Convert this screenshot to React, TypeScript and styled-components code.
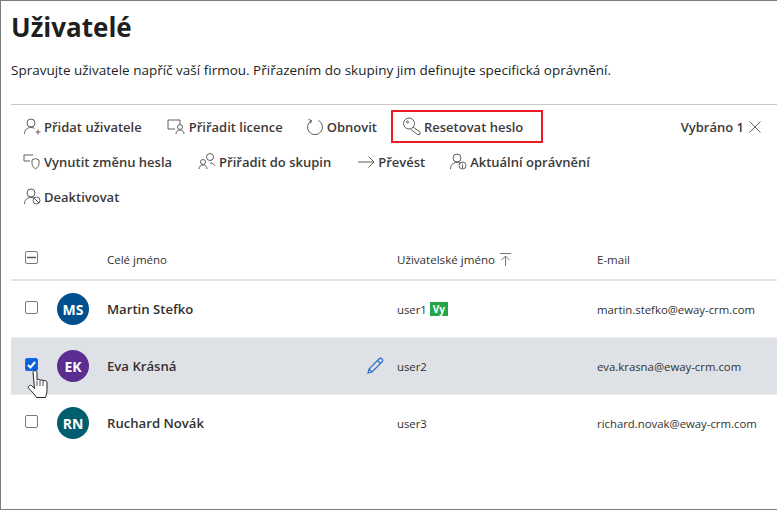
import React, { ReactNode } from "react";
import styled, { createGlobalStyle } from "styled-components";

const Global = createGlobalStyle`
  html, body { margin: 0; padding: 0; background: #fff; }
  body { font-family: "Open Sans", "Noto Sans", sans-serif; color: #201f1e; }
`;

const Frame = styled.div`
  width: 777px;
  height: 510px;
  box-sizing: border-box;
  border: 1px solid #7c7c7c;
  border-right: none;
  overflow: hidden;
  padding-left: 10px;
`;

const Title = styled.h1`
  margin: 0;
  padding-top: 7px;
  height: 38px;
  line-height: 38px;
  font-size: 26px;
  font-weight: 700;
  color: #201f1e;
`;

const Lead = styled.p`
  margin: 0;
  padding-top: 15px;
  height: 43px;
  line-height: 18px;
  font-size: 13.5px;
  color: #201f1e;
`;

const Toolbar = styled.div`
  border-top: 1px solid #c8c8c8;
  padding-top: 4px;
  height: 122px;
  box-sizing: border-box;
  display: flex;
  flex-direction: column;
`;

const ToolRow = styled.div`
  display: flex;
  align-items: center;
  height: 35px;
  padding-left: 11px;
`;

const Action = styled.div<{ $gap?: number; $mark?: boolean }>`
  display: flex;
  align-items: center;
  height: 33px;
  box-sizing: border-box;
  margin-right: ${(p) => p.$gap ?? 0}px;
  font-size: 13px;
  font-weight: 600;
  color: #3b3a39;
  white-space: nowrap;
  ${(p) => p.$mark && `border: 2px solid #ed1c24; padding: 0 18px 0 9px;`}
`;

const IconSlot = styled.svg`
  width: 22px;
  height: 22px;
  flex: none;
  fill: none;
  stroke: #605e5c;
  stroke-width: 1;
`;

const Selected = styled.div`
  margin-left: auto;
  margin-right: 16px;
  display: flex;
  align-items: center;
  gap: 5px;
  font-size: 13px;
  font-weight: 600;
  color: #3b3a39;
`;

const HeadRow = styled.div`
  display: grid;
  grid-template-columns: 96px 290px 200px 1fr;
  align-items: center;
  height: 55px;
  padding-top: 13px;
  box-sizing: border-box;
  border-bottom: 2px solid #e4e4e4;
  font-size: 11.5px;
  color: #323130;
`;

const Row = styled.div<{ $active?: boolean }>`
  display: grid;
  grid-template-columns: 96px 290px 200px 1fr;
  align-items: center;
  height: 56px;
  border-bottom: 1px solid #eceef0;
  background: ${(p) => (p.$active ? "#dee1e6" : "#fff")};
  font-size: 11.35px;
  color: #323130;

  &:last-child {
    border-bottom: none;
  }
`;

const CheckCell = styled.div`
  position: relative;
  display: flex;
  align-items: center;
  padding-left: 14px;
  gap: 19px;
`;

const Box = styled.span<{ $checked?: boolean }>`
  width: 13px;
  height: 13px;
  margin-top: -3px;
  box-sizing: border-box;
  border-radius: 2px;
  flex: none;
  border: 1px solid ${(p) => (p.$checked ? "#0d6efd" : "#7a7a7a")};
  background: ${(p) => (p.$checked ? "#0d62d8" : "#fff")};
  display: flex;
  align-items: center;
  justify-content: center;
`;

const Avatar = styled.span<{ $bg: string }>`
  width: 32px;
  height: 32px;
  border-radius: 50%;
  background: ${(p) => p.$bg};
  color: #fff;
  font-size: 14px;
  font-weight: 700;
  display: flex;
  align-items: center;
  justify-content: center;
  flex: none;
`;

const NameCell = styled.div`
  display: flex;
  align-items: center;
  justify-content: space-between;
  padding-right: 13px;
  font-size: 13.15px;
  font-weight: 600;
  color: #323130;
`;

const UserCell = styled.div`
  display: flex;
  align-items: center;
  gap: 3px;
`;

const Me = styled.span`
  background: #22a648;
  color: #fff;
  font-size: 10px;
  font-weight: 700;
  height: 14px;
  line-height: 14px;
  width: 18px;
  text-align: center;
`;

const SortHead = styled.div`
  display: flex;
  align-items: center;
  gap: 5px;
  font-size: 11.6px;
  font-weight: 500;
`;

const Cursor = styled.svg`
  position: absolute;
  left: 16px;
  top: 20px;
  width: 22px;
  height: 29px;
  z-index: 1;
`;

const Person = () => (
  <>
    <circle cx="9" cy="7" r="4" />
    <path d="M2.500 18c0-4 2.500-6.500 6.500-6.500 1.300 0 2.500.3 3.500.8" />
  </>
);

const Icon = ({ children }: { children: ReactNode }) => (
  <IconSlot viewBox="0 0 22 22">{children}</IconSlot>
);

const users = [
  { initials: "MS", bg: "#00508f", name: "Martin Stefko", user: "user1", mail: "martin.stefko@eway-crm.com", me: true },
  { initials: "EK", bg: "#5c2d91", name: "Eva Krásná", user: "user2", mail: "eva.krasna@eway-crm.com", active: true },
  { initials: "RN", bg: "#005e6e", name: "Ruchard Novák", user: "user3", mail: "richard.novak@eway-crm.com" },
];

export default function App() {
  return (
    <>
      <Global />
      <Frame>
        <Title>Uživatelé</Title>
        <Lead>Spravujte uživatele napříč vaší firmou. Přiřazením do skupiny jim definujte specifická oprávnění.</Lead>
        <Toolbar>
          <ToolRow>
            <Action $gap={25}>
              <Icon><Person /><path d="M13.500 16h5M16 13.500v5" /></Icon>
              Přidat uživatele
            </Action>
            <Action $gap={22}>
              <Icon><path d="M13 8V4H1v9h7" /><circle cx="13" cy="11" r="2.500" /><path d="M9 18c0-2.500 1.800-4 4-4s4 1.500 4 4" /></Icon>
              Přiřadit licence
            </Action>
            <Action $gap={14}>
              <Icon><path d="M6.500 4.500a7.500 7.500 0 1 0 7 0M3.500 3.500l3 1-1 3" /></Icon>
              Obnovit
            </Action>
            <Action $mark>
              <Icon><circle cx="7" cy="7.500" r="5.500" /><path d="M11 11l7 5v2.500h-2.500L9 13.500" /><circle cx="5.500" cy="6" r="1" /></Icon>
              Resetovat heslo
            </Action>
            <Selected>
              Vybráno 1
              <svg width="12" height="12" viewBox="0 0 12 12" fill="none" stroke="#605e5c"><path d="M.5.500l11 11M11.500.500l-11 11" /></svg>
            </Selected>
          </ToolRow>
          <ToolRow>
            <Action $gap={25}>
              <Icon><path d="M11 4H2v6h6" /><path d="M10 9l3.500-1.500L17 9v3.500c0 2.500-1.500 4-3.500 5.500-2-1.500-3.500-3-3.500-5.500z" /></Icon>
              Vynutit změnu hesla
            </Action>
            <Action $gap={25}>
              <Icon><circle cx="13" cy="6" r="3.500" /><circle cx="6" cy="11" r="2.500" /><path d="M2 18c0-2.500 1.800-4 4-4s4 1.500 4 4M13 12c2.500 0 4 1 5 3" /></Icon>
              Přiřadit do skupin
            </Action>
            <Action $gap={23}>
              <Icon><path d="M2 11h16M12.500 5.500L18 11l-5.500 5.500" /></Icon>
              Převést
            </Action>
            <Action>
              <Icon><Person /><circle cx="14.500" cy="14.500" r="3.500" /><path d="M14.500 14v3M14.500 12.500v.8" /></Icon>
              Aktuální oprávnění
            </Action>
          </ToolRow>
          <ToolRow>
            <Action>
              <Icon><Person /><circle cx="14.500" cy="14.500" r="3.500" /><path d="M12 12l5 5" /></Icon>
              Deaktivovat
            </Action>
          </ToolRow>
        </Toolbar>
        <HeadRow>
          <CheckCell>
            <Box><svg width="9" height="3" viewBox="0 0 9 3"><path d="M0 1.500h9" stroke="#555" strokeWidth="1.500" /></svg></Box>
          </CheckCell>
          <div>Celé jméno</div>
          <SortHead>
            Uživatelské jméno
            <svg width="11" height="13" viewBox="0 0 11 13" fill="none" stroke="#777"><path d="M0 .500h11M5.500 13V3M1.500 7l4-4 4 4" /></svg>
          </SortHead>
          <div>E-mail</div>
        </HeadRow>
        {users.map((u) => (
          <Row key={u.user} $active={u.active}>
            <CheckCell>
              <Box $checked={u.active}>
                {u.active && (
                  <svg width="9" height="8" viewBox="0 0 9 8" fill="none"><path d="M1 4l2.500 2.500L8 1" stroke="#fff" strokeWidth="2" /></svg>
                )}
              </Box>
              <Avatar $bg={u.bg}>{u.initials}</Avatar>
              {u.active && (
                <Cursor viewBox="0 0 22 29">
                  <path d="M6 2.500c0-2.500 4-2.500 4 0V10c1-1 3-1 3 .5 1-1 3-1 3 .5 1-.7 4-.7 4 1.500v7c0 3-.5 5-1.500 8h-9c-1-2.500-5-6-8-9.500-1-1.500.5-3 3-2.500l3 3z" fill="#fff" stroke="#222" />
                  <path d="M10 11v5M13 11v5M16 11v5" stroke="#222" strokeWidth=".8" />
                </Cursor>
              )}
            </CheckCell>
            <NameCell>
              {u.name}
              {u.active && (
                <svg width="18" height="18" viewBox="0 0 18 18" fill="none" stroke="#2f6fc4" strokeWidth="1.200"><path d="M2 16l1-4L13 2c1-1 2-1 3 0s1 2 0 3L6 15z M11.500 3.500l3 3 M3 12l3 3" /></svg>
              )}
            </NameCell>
            <UserCell>
              {u.user}
              {u.me && <Me>Vy</Me>}
            </UserCell>
            <div>{u.mail}</div>
          </Row>
        ))}
      </Frame>
    </>
  );
}
